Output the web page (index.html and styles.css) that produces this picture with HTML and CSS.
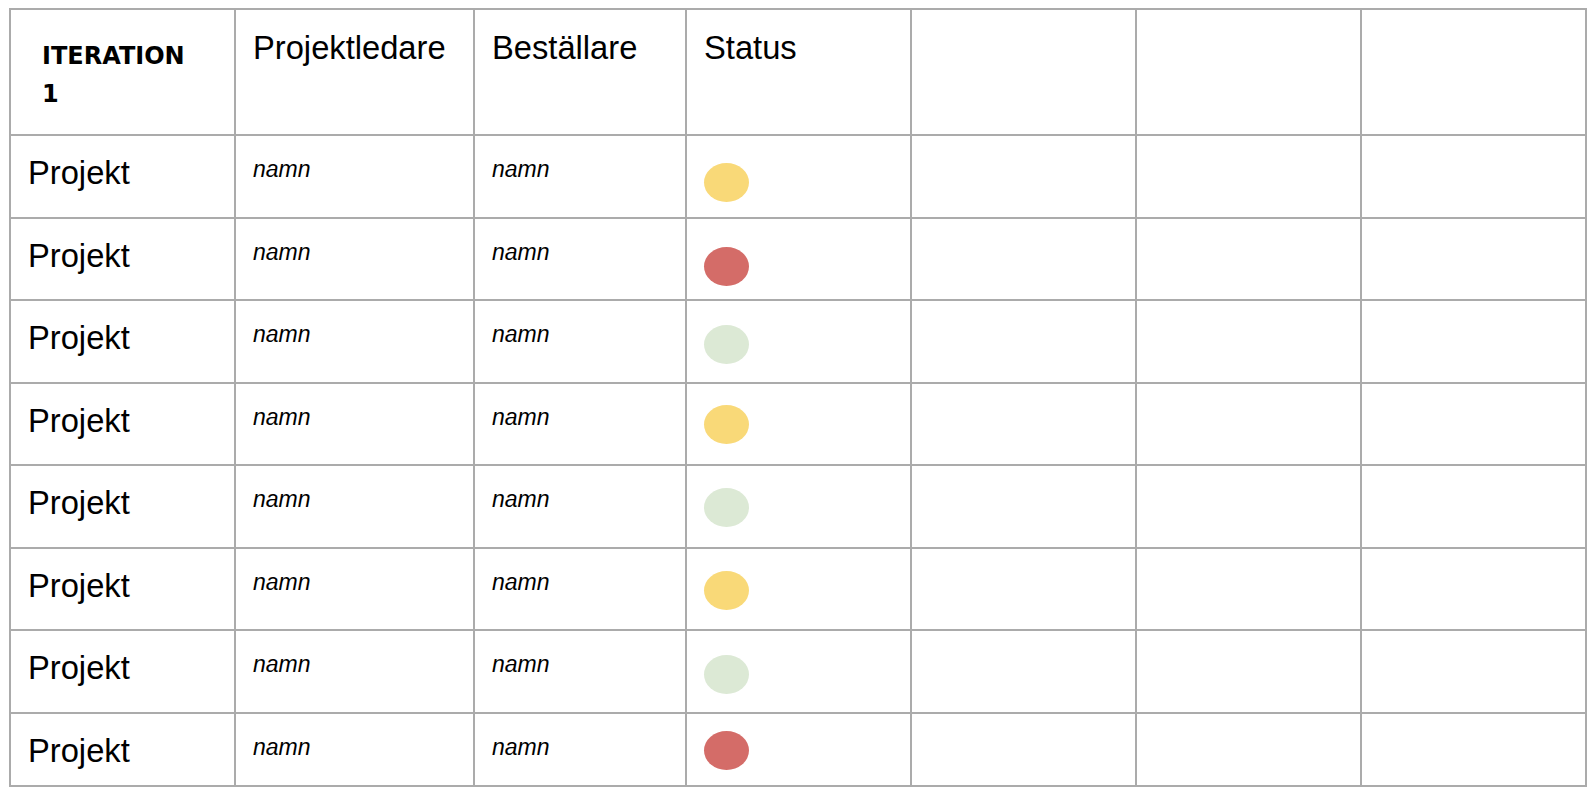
FILE: index.html
```html
<!DOCTYPE html>
<html lang="sv">
<head>
<meta charset="utf-8">
<title>Iteration 1</title>
<link rel="stylesheet" href="styles.css">
</head>
<body>
<table class="grid">
  <colgroup>
    <col class="c-name">
    <col class="c-lead">
    <col class="c-order">
    <col class="c-status">
    <col class="c-extra">
    <col class="c-extra">
    <col class="c-extra">
  </colgroup>
  <tr class="row-head">
    <td><div class="iteration">ITERATION<br>1</div></td>
    <td class="head">Projektledare</td>
    <td class="head">Beställare</td>
    <td class="head">Status</td>
    <td></td><td></td><td></td>
  </tr>
  <tr class="row-body">
    <td class="proj">Projekt</td><td class="name">namn</td><td class="name">namn</td>
    <td class="status st-27"><span class="dot dot-yellow"></span></td><td></td><td></td><td></td>
  </tr>
  <tr class="row-body">
    <td class="proj">Projekt</td><td class="name">namn</td><td class="name">namn</td>
    <td class="status st-28"><span class="dot dot-red"></span></td><td></td><td></td><td></td>
  </tr>
  <tr class="row-body">
    <td class="proj">Projekt</td><td class="name">namn</td><td class="name">namn</td>
    <td class="status st-24"><span class="dot dot-green"></span></td><td></td><td></td><td></td>
  </tr>
  <tr class="row-body">
    <td class="proj">Projekt</td><td class="name">namn</td><td class="name">namn</td>
    <td class="status st-21"><span class="dot dot-yellow"></span></td><td></td><td></td><td></td>
  </tr>
  <tr class="row-body">
    <td class="proj">Projekt</td><td class="name">namn</td><td class="name">namn</td>
    <td class="status st-22"><span class="dot dot-green"></span></td><td></td><td></td><td></td>
  </tr>
  <tr class="row-body">
    <td class="proj">Projekt</td><td class="name">namn</td><td class="name">namn</td>
    <td class="status st-22"><span class="dot dot-yellow"></span></td><td></td><td></td><td></td>
  </tr>
  <tr class="row-body">
    <td class="proj">Projekt</td><td class="name">namn</td><td class="name">namn</td>
    <td class="status st-24"><span class="dot dot-green"></span></td><td></td><td></td><td></td>
  </tr>
  <tr class="row-last">
    <td class="proj">Projekt</td><td class="name">namn</td><td class="name">namn</td>
    <td class="status st-17"><span class="dot dot-red"></span></td><td></td><td></td><td></td>
  </tr>
</table>
</body>
</html>
```

FILE: styles.css
```css
html, body {
  margin: 0;
  padding: 0;
  background: #ffffff;
}

body {
  padding: 8px 0 0 9px;
  font-family: "Liberation Sans", Arial, sans-serif;
  color: #000000;
}

.grid {
  border-collapse: collapse;
  table-layout: fixed;
  width: 1578px;
}

.c-name { width: 225px; }
.c-lead { width: 239px; }
.c-order { width: 212px; }
.c-status { width: 225px; }
.c-extra { width: 225px; }

.grid td {
  border: 2px solid #ababab;
  vertical-align: top;
  padding: 0 10px 0 17px;
  font-size: 32.7px;
  line-height: 37px;
}

.row-head { height: 126px; }
.row-body { height: 82.5px; }
.row-last { height: 73.5px; }

.iteration {
  font-family: "DejaVu Sans", sans-serif;
  font-weight: bold;
  font-size: 24px;
  line-height: 38px;
  padding: 27px 0 0 14px;
}

.grid td.head {
  padding-top: 19px;
}

.grid td.proj {
  padding-top: 18px;
}

.grid td.name {
  padding-top: 20px;
  font-style: italic;
  font-size: 23px;
  line-height: 26px;
}

.grid td.status {
  line-height: 0;
}

.grid td.st-17 { padding-top: 17px; }
.grid td.st-21 { padding-top: 21px; }
.grid td.st-22 { padding-top: 22px; }
.grid td.st-24 { padding-top: 24px; }
.grid td.st-27 { padding-top: 27px; }
.grid td.st-28 { padding-top: 28px; }

.dot {
  display: inline-block;
  width: 45px;
  height: 39px;
  border-radius: 50%;
}

.dot-yellow { background: #f9d978; }
.dot-red { background: #d46c68; }
.dot-green { background: #dce9d5; }
```
